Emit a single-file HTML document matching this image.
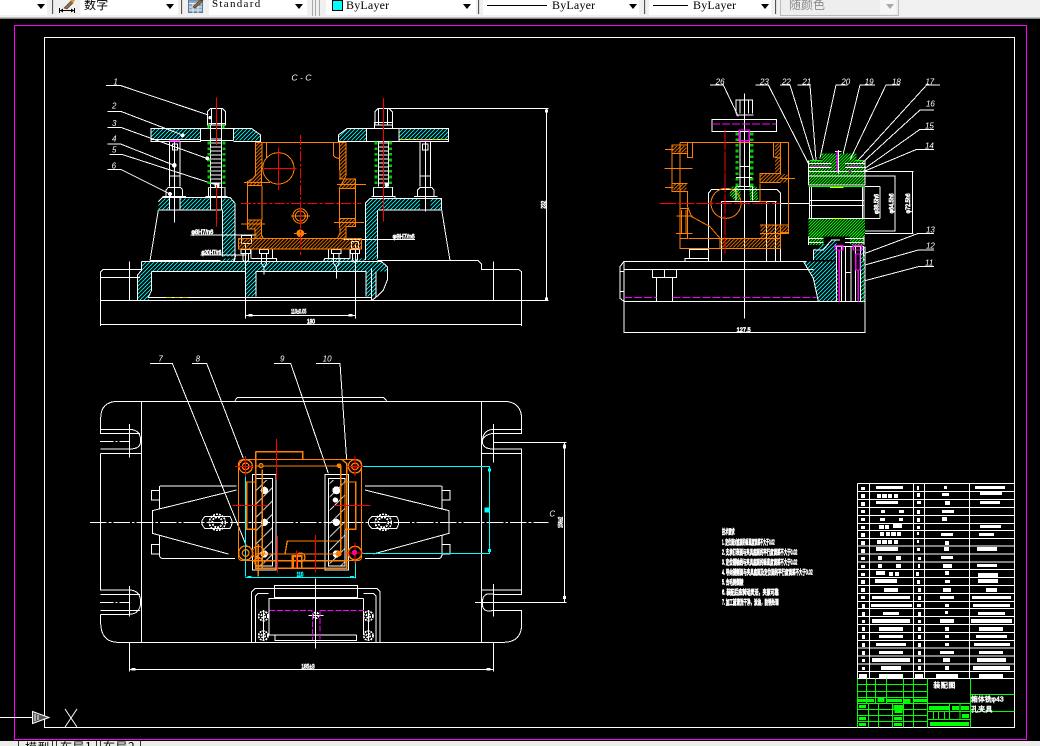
<!DOCTYPE html>
<html><head><meta charset="utf-8"><style>
html,body{margin:0;padding:0;background:#000}
#p{position:relative;width:1040px;height:746px;overflow:hidden;background:#000}
#tb{position:absolute;left:0;top:0;width:1040px;height:19px;background:#f0f0f0;border-bottom:0}
#tb div{position:absolute}
.c{top:0;height:15px;background:#fff}
.s{top:0;width:1px;height:14px;background:#555;border-right:1px solid #ddd}
.a{top:4px;width:0;height:0;border-left:4px solid transparent;border-right:4px solid transparent;border-top:5px solid #000}
.t{top:-2px;font:12px/14px "Liberation Serif","Noto Serif CJK SC",serif;color:#000;white-space:nowrap;letter-spacing:.2px}
svg{position:absolute;left:0;top:0}
text{font-family:"Liberation Sans","Noto Sans CJK SC",sans-serif}
#st{position:absolute;left:0;top:741px;width:1040px;height:5px;background:#ececec;overflow:hidden}
#st span{position:absolute;top:0;font:12px/15px "Noto Sans CJK SC",sans-serif;color:#000;white-space:nowrap}
#st i{position:absolute;top:0;width:1px;height:5px;background:#333}
</style></head><body><div id="p">
<div id="tb">
<div style="left:0;top:18px;width:1040px;height:1px;background:#8a8a8a"></div>
<div style="left:0;top:17px;width:1040px;height:1px;background:#c4c4c4"></div>
<div class="c" style="left:0;width:47px"></div><div class="a" style="left:37px"></div><div class="s" style="left:52px"></div>
<div class="c" style="left:80px;width:98px"></div><div class="t" style="left:84px;font-family:'WenQuanYi Zen Hei','Noto Sans CJK SC',sans-serif;font-size:12px">数字</div><div class="a" style="left:166px"></div><div class="s" style="left:181px"></div>
<div class="c" style="left:209px;width:98px"></div><div class="t" style="left:212px;font-size:11px;letter-spacing:1.3px;top:-3px">Standard</div><div class="a" style="left:295px"></div>
<div style="left:312px;top:0;width:1px;height:16px;background:#aaa"></div><div style="left:315px;top:0;width:1px;height:16px;background:#aaa"></div><div style="left:319px;top:0;width:1px;height:16px;background:#aaa"></div>
<div class="c" style="left:326px;width:150px"></div><div style="left:332px;top:0;width:9px;height:9px;background:#0ff;border:1px solid #000"></div><div class="t" style="left:346px">ByLayer</div><div class="a" style="left:463px"></div><div class="s" style="left:478px"></div>
<div class="c" style="left:483px;width:156px"></div><div style="left:487px;top:5px;width:60px;height:1px;background:#000"></div><div class="t" style="left:552px">ByLayer</div><div class="a" style="left:629px"></div><div class="s" style="left:644px"></div>
<div class="c" style="left:649px;width:122px"></div><div style="left:653px;top:5px;width:35px;height:1px;background:#000"></div><div class="t" style="left:693px">ByLayer</div><div class="a" style="left:761px"></div><div class="s" style="left:775px"></div>
<div style="left:780px;top:0;width:117px;height:15px;background:#eee;border:1px solid #bbb;border-top:0"></div><div class="t" style="left:789px;color:#8c8c8c;font-family:'WenQuanYi Zen Hei','Noto Sans CJK SC',sans-serif;letter-spacing:0">随颜色</div><div style="left:880px;top:0;width:16px;height:14px;background:#f6f6f6"></div><div class="a" style="left:886px;border-top-color:#aaa"></div>
</div>
<svg width="1040" height="746" viewBox="0 0 1040 746" fill="none">
<defs>
<pattern id="hc" width="12" height="12" patternUnits="userSpaceOnUse"><path d="M-3,3 L3,-3 M0,12 L12,0 M9,15 L15,9" stroke="#0ff" stroke-width="2.6"/></pattern>
<pattern id="ho" width="11" height="11" patternUnits="userSpaceOnUse"><path d="M-3,3 L3,-3 M0,11 L11,0 M8,14 L14,8" stroke="#ff7f00" stroke-width="2.6"/></pattern>
<pattern id="hg" width="9" height="9" patternUnits="userSpaceOnUse"><path d="M-3,3 L3,-3 M0,9 L9,0 M6,12 L12,6" stroke="#0f0" stroke-width="3"/></pattern>
<pattern id="hw" width="40" height="40" patternUnits="userSpaceOnUse"><path d="M0,40 L40,0" stroke="#fff" stroke-width="2.5"/></pattern>
</defs>
<!-- toolbar icons -->
<path d="M59,10.5 H75 M59.5,8 V13 M74.5,8 V13" stroke="#000"/>
<path d="M60,10.5 L63,8.5 V12.5 Z M74,10.5 L71,8.5 V12.5 Z" fill="#000"/>
<path d="M64,8 L71,1 L74,0 L73,3 L67,9 Z" fill="#9a6a3a" stroke="#444" stroke-width=".6"/>
<path d="M70,0 L75,0 L73,3 Z" fill="#d8a040"/>
<rect x="188.5" y="0" width="14" height="12.5" fill="#8ea9c8" stroke="#5f7898"/>
<path d="M189,3.5 H202 M189,7 H202 M189,10 H202 M193,3 V13 M198,3 V13" stroke="#e8eef5"/>
<path d="M193,7 L199,1 L203,0 L201,3 L195,8 Z" fill="#a06a30" stroke="#333" stroke-width=".6"/>

<rect x="14.5" y="25.5" width="1012" height="714" stroke="#f0f"/>
<rect x="44.5" y="37.5" width="970" height="690" stroke="#fff"/>
<path d="M0,717.5 H33" stroke="#fff"/>
<path d="M32.5,711.5 L49,717.5 L32.5,723.5 Z" fill="#555" stroke="#fff"/>
<path d="M35,714 V721 M38,715 V720" stroke="#fff"/>
<path d="M65,709 L77,727 M77,709 L65,727" stroke="#fff"/>

<!-- FRONT SECTION -->
<g transform="translate(90,70) scale(.33333)" stroke-width="3" shape-rendering="crispEdges">
<g fill="url(#hc)">
<path d="M183,175 H332 V208 H183 Z M430,175 H484 L512,195 V212 H430 Z M745,195 L772,175 H830 V212 H745 Z M927,175 H1076 V208 H927 Z"/>
<path d="M218,385 H238 V420 H205 V395 Z M270,385 H362 V420 H270 Z M865,385 H990 V420 H865 Z M1022,385 H1055 V420 H1022 Z"/>
<path d="M395,385 H420 L435,400 V560 H398 V420 H395 Z M840,385 H865 V420 H862 V570 H826 V400 Z"/>
<path d="M155,575 H392 L398,565 H435 V575 H700 L710,565 H830 V575 H875 L892,590 V605 H858 V680 H828 V605 H498 V680 H466 V605 H185 V660 L175,692 H143 V615 L155,600 Z"/>
</g>
<g stroke="#fff">
<path d="M48,46 H90 L355,135 M52,124 H92 L280,196 M52,172 H92 L350,265 M52,222 H92 L253,286 M58,254 H98 L380,345 M52,298 H92 L240,372"/>
<path d="M183,175 H332 V215 H183 Z M332,175 H430 V212 M332,212 H430 M430,175 H484 L512,195 V215 H430 M183,208 H332"/>
<path d="M745,195 L772,175 H1076 V215 H745 Z M830,175 V215 M927,175 V215 M927,208 H1076"/>
<path d="M205,420 H395 M205,420 L180,572 M205,395 L218,382 H395 L420,382 L435,400 V560 L430,575 M397,420 V560 M180,572 H392"/>
<path d="M865,420 H1055 V385 H840 L826,400 V570 M1055,420 L1080,572 M862,420 V565 M862,572 H1165 L1175,583 V598 H1285 L1295,605 V692"/>
<path d="M155,575 H875 L892,590 V630 L880,660 L860,680 L845,692 M185,605 H466 V680 M498,680 V605 H828 V680 M185,605 V660 L175,682 H845 M143,692 V615 L155,600 V575 M858,605 V680"/>
<path d="M32,605 L40,598 H155 M32,622 H150 M32,605 V764 H1295 V692 M32,692 H1295 M118,575 V692 M1210,575 V692 M845,595 V692"/>
<path d="M466,580 V745 M797,520 V745 M466,736 H797 M890,115 H1376 M845,692 H1376 M1370,115 V692 M32,768 V764 M1295,768 V764"/>
<path d="M302,495 H500 M332,555 H465 M760,508 H975 M840,508 V510"/>
<path d="M352,165 V125 L362,115 H397 L407,125 V165 H352 Z M365,115 V165 M395,115 V165 M362,165 V420 M395,165 V420 M355,160 H405 M348,380 H412 M355,352 H405 V380 M355,352 V380 M345,380 L352,385 M380,420 V470"/>
<path d="M238,215 V350 M270,215 V350 M247,222 H263 V240 H247 Z M238,318 H270 M238,352 H270 M228,380 V360 L235,352 H272 L278,360 V380 M218,380 H288 M238,380 V420 M270,380 V420 M253,215 V458"/>
<path d="M855,165 V125 L865,115 H897 L907,125 V165 H855 Z M865,115 V165 M893,115 V165 M853,175 V158 H908 V175 M865,215 V350 M895,215 V350 M850,352 H908 V380 M850,352 V380 M845,380 H915 V385 M880,420 V455"/>
<path d="M990,215 V350 M1022,215 V350 M998,222 H1014 V240 H998 Z M990,318 H1022 M990,352 H1022 M982,380 V360 L990,352 H1025 L1032,360 V380 M972,380 H1042 M1007,215 V425"/>
<path d="M453,550 H481 V538 H453 Z M459,550 V570 L467,578 L475,570 V550 M467,520 V610 M508,550 H536 V538 H508 Z M514,550 V580 L522,592 L530,580 V550 M522,590 V614"/>
<path d="M725,550 H753 V538 H725 Z M731,550 V580 L739,592 L747,580 V550 M739,590 V626 M781,550 H809 V538 H781 Z M787,550 V570 L795,578 L803,570 V550 M455,497 H485 M455,520 H485 M455,497 V520 M485,497 V520 M785,515 H805 V535 H785 Z"/>
<path d="M433,575 L437,555 H470 M483,565 V537 H548 V565 H485 M548,565 H560 V575 M700,575 L705,565 H780 M715,565 V537 H780 V565"/>
</g>
<path d="M378,205 V345" stroke="#fff" stroke-width="34" stroke-dasharray="3 9"/>
<path d="M882,218 V345" stroke="#fff" stroke-width="30" stroke-dasharray="3 9"/>
<path d="M357,215 V352 M402,215 V352 M858,215 V352 M902,215 V352" stroke="#0c0" stroke-width="9" stroke-dasharray="8 9"/>
<path d="M355,165 V175 M401,165 V175" stroke="#0f0" stroke-width="6"/>
<path d="M238,212 H270 M990,210 H1022" stroke="#f0f" stroke-width="4"/>
<path d="M228,682 H296 M930,208 H1076" stroke="#dd0" stroke-width="3" stroke-dasharray="18 6"/>
<g fill="#fff"><circle cx="278" cy="196" r="6"/><circle cx="352" cy="265" r="6"/><circle cx="253" cy="286" r="7"/><circle cx="381" cy="345" r="8"/><circle cx="240" cy="372" r="6"/><circle cx="360" cy="143" r="5"/><circle cx="890" cy="345" r="6"/>
<rect x="1365" y="118" width="9" height="9"/><rect x="1365" y="682" width="9" height="9"/><rect x="475" y="732" width="12" height="7"/><rect x="775" y="732" width="12" height="7"/></g>
<g fill="url(#ho)" stroke="#ff7f00">
<path d="M496,217 H516 V270 L514,320 L515,347 H472 V335 L490,325 L496,315 Z"/>
<path d="M768,217 H748 V270 L750,320 L749,327 H797 V355 H748 L768,317 Z"/>
<path d="M472,450 H515 V495 L520,505 H495 V477 H472 Z"/>
<path d="M748,445 H797 V470 H768 V505 H742 L750,490 Z"/>
<path d="M445,505 H815 V537 H445 Z"/>
</g>
<g stroke="#ff7f00">
<path d="M498,217 H768 M530,217 V265 M730,217 V250 Q730,265 748,265 M516,347 V450 M472,347 V450 M748,355 V445 M797,355 V445"/>
<circle cx="565" cy="295" r="47"/><circle cx="631" cy="438" r="22"/><circle cx="631" cy="438" r="15"/><circle cx="631" cy="490" r="10" fill="#ff7f00"/>
<path d="M462,338 H540 M453,462 H525 M741,343 H828 M732,458 H822 M603,438 H660 M612,490 H650"/>
</g>
<g stroke="#f00">
<path d="M380,82 V225 M380,345 V470 M880,84 V455 M520,295 H620 M565,232 V360 M631,420 V458"/>
<path d="M632,195 V555 M453,400 H815" stroke-dasharray="30 6 8 6"/>
</g>
<g fill="#fff" font-style="italic">
<text x="70" y="44" font-size="24">1</text><text x="66" y="116" font-size="24">2</text><text x="66" y="168" font-size="24">3</text><text x="66" y="215" font-size="24">4</text><text x="66" y="248" font-size="24">5</text><text x="65" y="296" font-size="24">6</text>
<text x="604" y="32" font-size="26">C - C</text>
</g>
<g fill="#fff" stroke="#fff" stroke-width="2" font-size="18">
<text x="304" y="492" textLength="66" lengthAdjust="spacingAndGlyphs">φ8H7/n6</text>
<text x="334" y="553" textLength="60" lengthAdjust="spacingAndGlyphs">φ20H7/r6</text>
<text x="908" y="506" textLength="66" lengthAdjust="spacingAndGlyphs">φ8H7/n6</text>
<text x="603" y="730" textLength="46" lengthAdjust="spacingAndGlyphs">110±0.05</text>
<text x="651" y="761" textLength="24" lengthAdjust="spacingAndGlyphs">180</text>
<text transform="translate(1366,416) rotate(-90)" textLength="24" lengthAdjust="spacingAndGlyphs">232</text>
</g>
</g>

<!-- SIDE SECTION -->
<g transform="translate(610,70) scale(.33333)" stroke-width="3" shape-rendering="crispEdges">
<g fill="url(#hc)">
<path d="M580,574 H680 V694 H625 L610,625 Z"/><path d="M610,570 V540 L665,510 H680 V570 Z"/><path d="M750,530 H763 V694 H750 Z"/>
</g>
<g fill="url(#hg)">
<path d="M635,272 V250 H740 V272 H765 V345 H595 V272 Z"/><path d="M595,445 H765 V500 H595 Z"/>
<path d="M595,485 H640 V525 H595 Z M720,485 H762 V525 H720 Z"/>
</g>
<path d="M366,350 H392 V392 H375 L358,375 Z M418,350 H440 L445,392 H420 Z" fill="url(#hg)"/>
<g stroke="#fff">
<path d="M300,45 H340 L385,140 M436,45 H475 L595,280 M510,45 H540 L610,270 M562,45 H600 L618,270 M712,45 H678 L630,265 M795,45 H750 L700,250 M870,45 H828 L720,270 M990,45 H950 L745,270 M972,120 H930 L755,280 M972,178 H930 L765,295 M972,238 H920 L760,305 M972,490 H925 L765,550 M972,540 H925 L765,585 M972,590 H925 L765,632"/>
<path d="M378,130 V90 H428 V130 M390,90 V130 M403,90 V130 M415,90 V130 M378,135 H430 M306,148 H500 V185 H306 Z M403,70 V745"/>
<path d="M390,185 V350 M418,185 V350 M378,322 H428 M378,350 H428 V392 M378,350 V392 M390,290 H418"/>
<path d="M42,574 H590 M42,598 H610 M42,574 L30,590 V685 L42,694 H765 M42,694 V788 H765 V694 M30,605 H42 M30,665 H42 M42,574 V694"/>
<path d="M127,598 H200 V622 H127 Z M139,622 V694 M188,622 V694 M163,598 V622"/>
<path d="M295,574 V370 L305,358 H500 L512,370 V574 M335,574 V395 M470,574 V395 M497,574 V395 M335,395 H500 M225,574 V565 H295 M238,565 V538 H295"/>
<path d="M512,400 H598 M765,305 H910 M908,305 V492 M765,490 H910 M855,318 V483 M765,318 H857 M765,483 H857 M810,350 V445 M765,350 H810 M765,445 H810"/>
<path d="M595,272 V345 M765,272 V345 M595,345 H765 M595,445 H765 M598,350 H762 V445 H598 Z M604,350 V445 M758,350 V445 M600,392 H760 M600,406 H760"/>
<path d="M595,280 H665 M595,292 H665 M705,280 H765 M705,292 H765 M595,305 H765 M595,318 H765 M685,240 V310 M675,245 H695 M595,505 H640 M595,518 H640 M705,505 H760 M705,518 H760 M595,500 V525 M762,500 V525"/>
<path d="M610,570 V540 H640 L665,510 H690 M580,574 L610,625 L625,694 M680,530 V694 M695,530 V694 M707,530 H723 V694 M707,530 V694 M737,530 V694 M752,530 V694 M707,608 H723 M675,530 H760 V575 M765,530 V694"/>
</g>
<path d="M306,162 H500 M42,683 H140 M188,683 H620" stroke="#f0f" stroke-dasharray="24 6"/>
<path d="M600,288 H660 M710,288 H755 M682,245 V305 M388,180 H418 V212 H388 Z M675,527 H698 V540 H675 Z M730,527 H755 V540 H730 Z M688,540 V694 M737,552 H750 V600 H737 Z M745,600 V694 M715,305 H725" stroke="#f0f" stroke-width="4"/>
<path d="M381,188 V350 M425,188 V350" stroke="#0c0" stroke-width="10" stroke-dasharray="8 9"/>
<path d="M683,600 V694 M760,560 V694" stroke="#0c0" stroke-dasharray="6 6"/>
<path d="M306,535 H455" stroke="#0ff" stroke-dasharray="36 8 8 8"/>
<path d="M600,272 H635 M735,272 H760 M595,350 H765" stroke="#0f0" stroke-width="3"/>
<path d="M660,352 H700 M668,445 H700" stroke="#ff0"/>
<g stroke="#ff7f00">
<path d="M210,217 H535 V488 H512 M210,217 V535 H512 V465 H450 M450,340 V395 H470"/>
<path d="M512,217 V310 H450 V338 H512 M490,217 V260 L510,265 M232,217 V262 H248 V217"/>
<path d="M186,225 H232 V250 H186 Z M186,250 V340 H232 M186,340 V365 H232 V408 L245,440 L300,470 L330,505 V535"/>
<path d="M210,415 H232 V505 H210 M215,420 V490 M228,420 V490 M163,295 H248 M188,225 H210 M165,238 H190 M165,352 H190 M200,438 H248 M198,490 H248 M235,505 H512"/>
<circle cx="348" cy="400" r="45"/>
<path d="M450,465 H535 V490 H450 M512,325 H555 M512,465 V535"/>
</g>
<path d="M188,228 H230 V248 H188 Z M190,342 H230 V362 H190 Z M495,220 H512 V308 H495 Z M452,312 H532 V338 H452 Z M452,465 H510 V532 H335 L330,505 H452 Z M512,468 H535 V488 H512 Z" fill="url(#ho)"/>
<path d="M345,180 V550" stroke="#f00" stroke-dasharray="60 4"/>
<path d="M148,400 H512" stroke="#f00" stroke-dasharray="50 6"/>
<g fill="#fff" font-style="italic" font-size="24">
<text x="317" y="44">26</text><text x="450" y="44">23</text><text x="516" y="44">22</text><text x="577" y="44">21</text><text x="694" y="44">20</text><text x="764" y="44">19</text><text x="846" y="44">18</text><text x="946" y="44">17</text><text x="948" y="110">16</text><text x="945" y="176">15</text><text x="945" y="236">14</text><text x="948" y="488">13</text><text x="948" y="535">12</text><text x="945" y="586">11</text>
</g>
<g fill="#fff" stroke="#fff" stroke-width="2" font-size="18">
<text x="380" y="786" textLength="42" lengthAdjust="spacingAndGlyphs">127.5</text>
<text transform="translate(806,432) rotate(-90)" textLength="60" lengthAdjust="spacingAndGlyphs">φ38.5h6</text>
<text transform="translate(850,430) rotate(-90)" textLength="60" lengthAdjust="spacingAndGlyphs">φ64.5h6</text>
<text transform="translate(900,430) rotate(-90)" textLength="60" lengthAdjust="spacingAndGlyphs">φ72.5h6</text>
</g>
</g>

<!-- PLAN VIEW -->
<g transform="translate(90,350) scale(.33333)" stroke-width="3" shape-rendering="crispEdges">
<g stroke="#fff">
<path d="M180,40 H247 L470,590 M306,40 H350 L460,325 M552,40 H602 L715,370 M678,40 H750 L770,330"/>
<path d="M85,154 H1240 Q1295,154 1295,208 V250 H1210 Q1178,255 1177,275 Q1178,297 1210,297 H1295 V310 H1175 M1175,154 V877 M155,154 V877"/>
<path d="M85,154 Q32,154 32,205 V250 H150 M32,238 H120 Q152,240 152,272 Q152,297 120,297 H32 M32,310 H155 M32,310 V720 H120 Q152,722 152,758 Q150,792 118,793 H32 M32,733 H150 M32,781 H150 M32,793 V820 Q34,877 85,877 H1240 Q1295,877 1295,822 V781 H1210 Q1175,790 1177,757 Q1178,725 1210,733 H1295 V720 H1175 M1295,720 V310 M1295,238 H1210 Q1178,240 1177,275"/>
<path d="M435,152 L442,142 H880 L890,152"/>
<path d="M118,222 V322 M118,708 V800 M118,877 V965 M1210,222 V338 M1210,702 V800 M1210,877 V965"/>
<path d="M118,958 H1210 M1210,277 H1430 M1155,757 H1430 M1423,277 V757"/>
<path d="M184,422 H208 V450 H184 Z M210,408 H440 M208,408 V475 M187,482 L440,420 M187,482 V550 L415,612 M208,556 V615 Q210,626 220,626 H435 M184,584 H208 V612 H184 Z"/>
<path d="M1080,422 H1056 V450 H1080 Z M1054,408 H825 M1056,408 V475 M1077,482 L825,420 M1077,482 V550 L850,612 M1056,556 V615 Q1054,626 1044,626 H825 M1080,584 H1056 V612 H1080 Z"/>
<path d="M345,500 H420 Q432,517 420,535 H345 Q325,517 345,500 Z M845,500 H920 Q932,517 920,535 H845 Q825,517 845,500 Z"/>
<path d="M488,373 H558 V660 H488 Z M498,385 H548 V648 H498 Z M705,373 H775 V660 H705 Z M716,385 H765 V648 H716 Z"/>
<path d="M485,877 V725 L495,715 H860 L870,725 V877 M553,707 H802 V742 H553 Z M535,745 H820 M497,877 V738 L505,730 H535 M858,877 V738 L850,730 H820 M537,745 V855 H800 M800,855 V872 H555 V855 M820,745 V855 M676,685 V895 M655,796 H700 M520,780 V870 M835,780 V870"/>
</g>
<path d="M499,390 H546 V646 H499 Z M718,390 H763 V646 H718 Z" fill="url(#hw)"/>
<path d="M0,517 H1375" stroke="#fff" stroke-dasharray="50 6 8 6"/>
<path d="M30,274 H118 M30,757 H118" stroke="#fff" stroke-dasharray="40 6 6 6"/>
<g fill="#fff"><circle cx="523" cy="421" r="11"/><circle cx="523" cy="517" r="11"/><circle cx="523" cy="612" r="11"/><circle cx="739" cy="421" r="12"/><circle cx="739" cy="517" r="11"/><circle cx="739" cy="612" r="11"/><circle cx="736" cy="450" r="8"/></g>
<g stroke="#fff" stroke-width="5" stroke-dasharray="6 3"><circle cx="382" cy="517" r="24"/><circle cx="382" cy="517" r="15"/><circle cx="880" cy="517" r="24"/><circle cx="880" cy="517" r="15"/><circle cx="520" cy="798" r="14"/><circle cx="520" cy="798" r="6"/><circle cx="520" cy="857" r="14"/><circle cx="520" cy="857" r="6"/><circle cx="835" cy="798" r="14"/><circle cx="835" cy="798" r="6"/><circle cx="835" cy="857" r="14"/><circle cx="835" cy="857" r="6"/><circle cx="677" cy="796" r="9"/></g>
<path d="M538,781 H665 L668,790 V870 M690,781 H822 M690,781 V870" stroke="#f0f" stroke-width="3" stroke-dasharray="18 5"/>
<g stroke="#0ff">
<path d="M815,349 H1200 M815,610 H1200 M1198,349 V610 M466,380 V680 M797,630 V685 M466,682 H797"/>
</g>
<g fill="#0ff"><rect x="1194" y="356" width="9" height="9"/><rect x="1194" y="597" width="9" height="9"/><rect x="1183" y="472" width="14" height="16"/><rect x="472" y="678" width="12" height="5"/><rect x="780" y="678" width="12" height="5"/></g>
<g stroke="#ff7f00" stroke-width="4">
<path d="M445,345 Q445,330 460,328 H800 Q815,330 815,345 V620 Q815,632 800,632 H460 Q445,632 445,620 Z" stroke-width="3"/>
<path d="M497,305 H638 V328 M497,305 V655 H770 V340 L755,328 M497,348 H752 V612 M497,612 H752 M517,358 V655 M470,396 H497 V538 H470 Z M765,396 H797 V538 H765 Z M585,612 L592,573 H745 M505,582 V680 M497,632 H770"/>
<circle cx="467" cy="349" r="20"/><circle cx="467" cy="349" r="10"/><circle cx="795" cy="349" r="20"/><circle cx="795" cy="349" r="10"/><circle cx="467" cy="609" r="21"/><circle cx="467" cy="609" r="10"/><circle cx="795" cy="609" r="20"/>
<circle cx="513" cy="347" r="6"/><circle cx="747" cy="347" r="5" fill="#ff7f00"/><circle cx="746" cy="611" r="7" fill="#ff7f00"/><circle cx="505" cy="607" r="18" stroke-dasharray="5 2"/><circle cx="505" cy="635" r="12" stroke-dasharray="5 2"/>
<path d="M607,618 H635 V655 H607 Z M610,655 V620 M621,655 V620" stroke-width="5"/><circle cx="632" cy="622" r="13"/>
</g>
<circle cx="794" cy="608" r="8" fill="#f0f"/>
<g stroke="#f00">
<path d="M435,349 H490 M467,318 V378 M770,349 H820 M795,318 V378 M770,609 H820 M795,578 V640 M428,466 H533 M730,466 H842 M560,267 V390 M563,558 V668 M676,555 V668 M619,602 V652"/>
</g>
<g fill="#fff" font-style="italic" font-size="24">
<text x="205" y="34">7</text><text x="317" y="34">8</text><text x="570" y="34">9</text><text x="698" y="34">10</text><text x="1378" y="500">C</text>
</g>
<g fill="#fff" stroke="#fff" stroke-width="2" font-size="18">
<text x="634" y="955" textLength="40" lengthAdjust="spacingAndGlyphs">185±3</text>
<text transform="translate(1418,534) rotate(-90)" textLength="34" lengthAdjust="spacingAndGlyphs">156±2</text>
</g>
<g fill="#0ff" font-size="18" stroke="#0ff" stroke-width="2"><text x="620" y="680" textLength="20" lengthAdjust="spacingAndGlyphs">110</text></g>
<g fill="#fff"><rect x="1419" y="284" width="9" height="12"/><rect x="1419" y="738" width="9" height="9"/><rect x="125" y="954" width="12" height="8"/><rect x="1190" y="954" width="12" height="8"/></g>
</g>

<!-- NOTES -->
<g transform="translate(710,520) scale(.33333)" fill="#fff" stroke="#fff" stroke-width="2.5" font-size="21">
<text x="36" y="42" textLength="38" lengthAdjust="spacingAndGlyphs">技术要求</text>
<text x="36" y="74" textLength="158" lengthAdjust="spacingAndGlyphs">1. 定位面对底面的垂直度误差不大于0.02</text>
<text x="36" y="104" textLength="226" lengthAdjust="spacingAndGlyphs">2. 支承钉表面与夹具底面的平行度误差不大于0.02</text>
<text x="36" y="134" textLength="226" lengthAdjust="spacingAndGlyphs">3. 定位销轴线与夹具底面的垂直度误差不大于0.02</text>
<text x="36" y="164" textLength="272" lengthAdjust="spacingAndGlyphs">4. 导向键侧面与夹具底面及定位面的平行度误差不大于0.02</text>
<text x="36" y="194" textLength="64" lengthAdjust="spacingAndGlyphs">5. 去毛刺倒棱</text>
<text x="36" y="224" textLength="170" lengthAdjust="spacingAndGlyphs">6. 装配后应转动灵活，夹紧可靠</text>
<text x="36" y="254" textLength="170" lengthAdjust="spacingAndGlyphs">7. 加工前清洗干净，涂油，防锈处理</text>
</g>

<!-- TABLE -->
<g transform="translate(850,480) scale(.33333)" stroke-width="3" shape-rendering="crispEdges">
<path stroke="#fff" d="M22,10 V596 M58,10 V596 M190,10 V596 M224,10 V596 M358,10 V596 M22,10 H492 M22,34 H492 M22,58 H492 M22,82 H492 M22,106 H492 M22,130 H492 M22,152 H492 M22,176 H492 M22,198 H492 M22,222 H492 M22,246 H492 M22,268 H492 M22,292 H492 M22,316 H492 M22,340 H492 M22,364 H492 M22,386 H492 M22,410 H492 M22,434 H492 M22,458 H492 M22,482 H492 M22,504 H492 M22,528 H492 M22,552 H492 M22,574 H492 M22,596 H492"/>
<path fill="#fff" d="M33,21h12v9h-12zM78,18h81v9h-81zM201,18h6v12h-6zM282,18h9v9h-9zM375,18h90v9h-90zM33,42h12v12h-12zM81,42h12v12h-12zM96,42h15v12h-15zM114,42h12v12h-12zM132,42h12v12h-12zM201,39h9v12h-9zM276,39h21v9h-21zM390,36h66v9h-66zM33,66h12v12h-12zM78,63h66v9h-66zM201,63h12v9h-12zM285,63h15v12h-15zM390,63h60v9h-60zM33,90h12v9h-12zM93,90h12v9h-12zM147,90h15v9h-15zM201,90h9v12h-9zM276,90h36v9h-36zM33,114h12v9h-12zM90,114h15v9h-15zM147,114h12v9h-12zM201,114h9v12h-9zM276,111h15v12h-15zM33,138h12v9h-12zM87,135h15v12h-15zM105,135h12v12h-12zM129,132h27v12h-27zM201,138h9v9h-9zM390,135h63v9h-63zM33,159h12v12h-12zM90,156h12v12h-12zM108,156h12v12h-12zM123,156h15v12h-15zM141,156h12v12h-12zM201,156h6v9h-6zM273,159h36v9h-36zM387,159h45v9h-45zM33,183h12v12h-12zM81,180h12v12h-12zM96,180h15v12h-15zM114,180h12v12h-12zM132,180h12v12h-12zM201,180h6v9h-6zM285,183h12v12h-12zM33,207h12v12h-12zM78,201h66v12h-66zM201,204h9v9h-9zM282,201h15v12h-15zM381,201h60v12h-60zM33,231h12v9h-12zM84,228h12v12h-12zM138,228h15v12h-15zM204,231h9v9h-9zM273,228h36v9h-36zM33,255h12v9h-12zM84,252h12v12h-12zM138,252h15v12h-15zM204,252h6v12h-6zM279,252h27v12h-27zM381,252h60v9h-60zM33,279h12v9h-12zM78,273h27v12h-27zM117,276h12v12h-12zM135,276h12v12h-12zM198,276h9v12h-9zM285,273h12v12h-12zM384,279h60v12h-60zM33,300h12v12h-12zM75,297h66v12h-66zM201,300h9v12h-9zM285,300h15v9h-15zM384,297h60v12h-60zM33,324h12v12h-12zM102,324h42v12h-42zM204,324h9v12h-9zM279,324h24v12h-24zM408,324h33v12h-33zM33,348h12v9h-12zM66,348h114v9h-114zM204,348h9v12h-9zM270,348h42v9h-42zM366,348h117v9h-117zM36,372h9v12h-9zM63,372h123v9h-123zM201,372h12v9h-12zM285,372h12v9h-12zM369,372h111v9h-111zM36,396h9v12h-9zM99,396h48v9h-48zM204,396h9v12h-9zM285,393h9v9h-9zM384,396h81v9h-81zM36,420h9v9h-9zM66,417h114v12h-114zM204,420h9v9h-9zM270,417h42v12h-42zM363,417h123v12h-123zM36,441h9v12h-9zM87,441h72v12h-72zM204,441h9v12h-9zM285,441h12v12h-12zM387,441h72v12h-72zM36,465h9v12h-9zM87,465h72v9h-72zM204,465h9v12h-9zM285,465h12v9h-12zM378,465h93v9h-93zM36,489h9v12h-9zM78,489h90v9h-90zM204,489h9v12h-9zM285,489h12v9h-12zM372,489h108v9h-108zM36,513h9v12h-9zM87,513h72v9h-72zM204,513h9v12h-9zM270,513h42v9h-42zM387,513h72v9h-72zM36,537h9v9h-9zM66,534h114v12h-114zM204,537h9v9h-9zM279,534h21v12h-21zM381,534h87v12h-87zM36,561h9v9h-9zM93,558h60v12h-60zM204,558h9v12h-9zM285,558h12v12h-12zM369,558h111v12h-111zM27,582h24v12h-24zM87,582h72v12h-72zM195,582h24v12h-24zM258,582h66v12h-66zM387,582h72v12h-72z"/>
<path stroke="#0f0" d="M22,596 V742 M49,596 V670 M76,596 V670 M109,596 V670 M160,596 V742 M190,596 V742 M232,596 V742 M361,596 V742 M55,670 V742 M85,670 V742 M127,670 V742 M22,613 H232 M22,634 H232 M22,652 H232 M22,670 H232 M22,688 H232 M22,706 H232 M22,724 H232 M232,670 H361 M232,694 H361 M232,718 H361 M298,670 V694 M330,670 V718 M250,694 V718 M266,694 V718 M283,694 V718 M298,694 V718 M361,643 H494 M361,694 H494"/>
<path fill="#0f0" d="M24,657h48v9h-48zM82,652h21v14h-21zM111,657h45v9h-45zM160,657h22v14h-22zM192,657h39v9h-39zM27,675h21v9h-21zM130,675h30v12h-30zM133,687h24v12h-24zM27,711h21v9h-21zM132,711h24v9h-24zM27,729h21v9h-21zM132,729h24v9h-24zM237,678h60v12h-60zM306,678h21v12h-21zM333,678h24v12h-24zM336,702h21v12h-21zM240,726h117v12h-117z"/>
<g fill="#fff" stroke="#fff" stroke-width="1.5" font-size="21">
<text x="250" y="622" textLength="66" lengthAdjust="spacing" fill="#dfe8ef">装配图</text>
<text x="363" y="664" textLength="98" lengthAdjust="spacingAndGlyphs">箱体铣φ43</text>
<text x="363" y="694" textLength="64" lengthAdjust="spacing">孔夹具</text>
</g>
</g>
</svg>
<div id="st">
<i style="left:18px"></i><i style="left:52px"></i><span style="left:25px;top:-1px;letter-spacing:.5px">模型</span>
<i style="left:56px"></i><i style="left:96px"></i><span style="left:60px;top:-2px;letter-spacing:.5px">布局1</span>
<i style="left:100px"></i><i style="left:140px"></i><span style="left:103px;top:-2px;letter-spacing:.5px">布局2</span>
</div>
</div></body></html>
